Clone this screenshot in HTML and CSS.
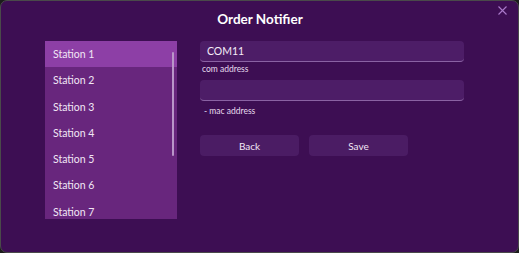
FILE: index.html
```html
<!DOCTYPE html>
<html lang="en">
<head>
    <meta charset="UTF-8">
    <meta name="viewport" content="width=device-width, initial-scale=1.0">
    <title>Order Notifier</title>
    <link rel="stylesheet" href="styles.css">
</head>
<body>
    <div class="window">
        <div class="title-bar">
            <h1>Order Notifier</h1>
            <svg class="close-button" width="9" height="9" viewBox="0 0 9 9">
                <path d="M0.5 0.5 L8.5 8.5 M8.5 0.5 L0.5 8.5" stroke="#a979c9" stroke-width="1.1" fill="none"/>
            </svg>
        </div>
        <div class="main">
            <div class="station-list">
                <div class="station selected">Station 1</div>
                <div class="station">Station 2</div>
                <div class="station">Station 3</div>
                <div class="station">Station 4</div>
                <div class="station">Station 5</div>
                <div class="station">Station 6</div>
                <div class="station">Station 7</div>
                <div class="scrollbar"></div>
            </div>
            <div class="settings">
                <div class="text-box">COM11</div>
                <div class="field-label">com address</div>
                <div class="text-box"></div>
                <div class="field-label mac">- mac address</div>
                <div class="buttons">
                    <button>Back</button>
                    <button>Save</button>
                </div>
            </div>
        </div>
    </div>
</body>
</html>
```

FILE: styles.css
```css
body {
    margin: 0;
    padding: 0;
    background: #1c1c1c;
    font-family: Lato, "Noto Sans", sans-serif;
    color: white;
}

/* Window frame */
.window {
    box-sizing: border-box;
    width: 519px;
    height: 253px;
    background-color: #3d0e53;
    border: 1px solid #4a4a4a;
    border-radius: 7px;
    overflow: hidden;
}

.title-bar {
    position: relative;
    height: 40px;
    display: flex;
    justify-content: center;
    align-items: center;
}

.title-bar h1 {
    margin: 0;
    font-size: 13.5px;
    font-weight: 700;
    margin-top: -5px;
    margin-left: 1px;
}

.close-button {
    position: absolute;
    top: 5px;
    right: 11px;
}

/* List + form */
.main {
    display: flex;
    padding-left: 44px;
    gap: 23px;
}

.station-list {
    position: relative;
    width: 132px;
    height: 178px;
    background-color: #68267d;
    overflow: hidden;
}

.station {
    height: 26.3px;
    line-height: 26px;
    padding-left: 8px;
    font-size: 10.5px;
    color: #f1e6f5;
}

.station.selected {
    background-color: #8d3fa6;
}

.scrollbar {
    position: absolute;
    top: 11px;
    right: 3px;
    width: 2px;
    height: 104px;
    border-radius: 1px;
    background-color: #b996c9;
}

.settings {
    width: 264px;
}

.text-box {
    box-sizing: border-box;
    height: 21px;
    line-height: 20px;
    padding-left: 7px;
    background-color: #4d1d67;
    border-radius: 4px;
    border-bottom: 1px solid #8a62a3;
    font-size: 10.5px;
    color: #f4ecf8;
}

.field-label {
    font-size: 8.5px;
    color: #e6dbee;
    margin: 2px 0 5px 2px;
    height: 11px;
}

.field-label.mac {
    margin: 5px 0 0 4px;
}

.buttons {
    display: flex;
    gap: 10px;
    margin-top: 18px;
}

.buttons button {
    width: 99px;
    height: 21px;
    border: none;
    border-radius: 4px;
    background-color: #4b1c64;
    color: #f1e6f5;
    font-family: inherit;
    font-size: 10px;
    padding: 0;
}
```
